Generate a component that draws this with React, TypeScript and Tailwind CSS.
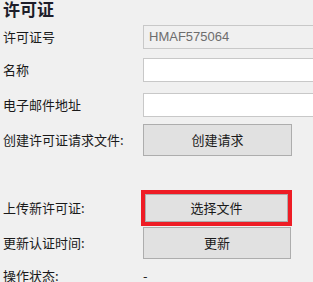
import React from "react";

const font = { fontFamily: '"Noto Sans CJK SC", "Microsoft YaHei", sans-serif' };

function Row({ label, children, className = "" }: { label: string; children?: React.ReactNode; className?: string }) {
  return (
    <div className={"flex items-center " + className}>
      <div className="w-[143px] shrink-0 pl-[3px] text-[13px] leading-[16px] text-[#1a1a1a] whitespace-nowrap">{label}</div>
      <div className="flex-1 h-full flex items-center">{children}</div>
    </div>
  );
}

export default function App() {
  return (
    <div className="w-[313px] h-[282px] bg-[#f0f0f0] overflow-hidden" style={font}>
      <div className="h-[25px] pl-[3px] text-[17px] leading-[18px] font-bold text-[#1e1e2a]">许可证</div>
      <Row label="许可证号" className="h-[24px]">
        <div className="w-[180px] h-full border border-[#c8c8c8] bg-[#f0f0f0] flex items-center pl-[5px] text-[13px] text-[#6d6d6d]" style={{ fontFamily: '"Liberation Sans", "Noto Sans", sans-serif' }}>
          HMAF575064
        </div>
      </Row>
      <Row label="名称" className="h-[24px] mt-[9px]">
        <div className="w-[180px] h-full border border-[#c8c8c8] bg-white" />
      </Row>
      <Row label="电子邮件地址" className="h-[24px] mt-[11px]">
        <div className="w-[180px] h-full border border-[#c8c8c8] bg-white" />
      </Row>
      <Row label="创建许可证请求文件:" className="h-[32px] mt-[7px]">
        <div className="w-[149px] h-full border border-[#adadad] bg-[#e1e1e1] flex items-center justify-center text-[13px] text-[#1a1a1a]">创建请求</div>
      </Row>
      <Row label="上传新许可证:" className="h-[36px] mt-[34px]">
        <div className="ml-[-2px] w-[151px] h-full border-4 border-[#ee1c25] flex">
          <div className="flex-1 border border-[#adadad] bg-[#e1e1e1] flex items-center justify-center text-[13px] text-[#1a1a1a]">选择文件</div>
        </div>
      </Row>
      <Row label="更新认证时间:" className="h-[32px] mt-[1px]">
        <div className="w-[148px] h-full border border-[#adadad] bg-[#e1e1e1] flex items-center justify-center text-[13px] text-[#1a1a1a]">更新</div>
      </Row>
      <Row label="操作状态:" className="h-[24px] mt-[5px]">
        <span className="text-[13px] text-[#1a1a1a]">-</span>
      </Row>
    </div>
  );
}
